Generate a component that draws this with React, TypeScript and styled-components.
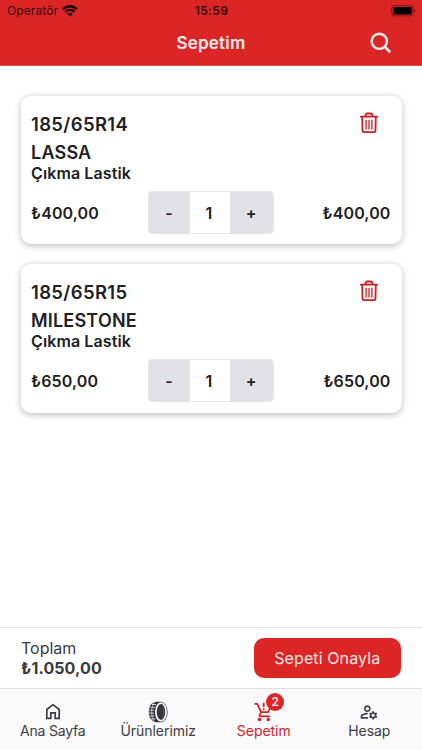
import React from "react";
import styled, { createGlobalStyle } from "styled-components";
import { MdOutlineManageAccounts } from "react-icons/md";

const RED = "#dc2626";

const GlobalStyle = createGlobalStyle`
  * { box-sizing: border-box; }
  body { margin: 0; background: #fff; }
  button { font: inherit; color: inherit; border: 0; padding: 0; background: none; }
  svg { display: block; }
`;

const Screen = styled.div`
  width: 422px;
  height: 750px;
  display: flex;
  flex-direction: column;
  background: #fff;
  color: #202124;
  font-family: Inter, "Liberation Sans", sans-serif;
  overflow: hidden;
`;

const Header = styled.header`
  height: 66px;
  flex: none;
  background: ${RED};
  border-bottom: 1px solid #dc5050;
`;

const StatusBar = styled.div`
  height: 22px;
  display: grid;
  grid-template-columns: 1fr auto 1fr;
  align-items: center;
  padding: 0 6px 0 7px;
  color: #350909;
  font-size: 12px;
  line-height: 22px;
`;

const Carrier = styled.div`
  display: flex;
  align-items: center;
  gap: 4px;
  letter-spacing: 0.1px;
`;

const Clock = styled.div`
  font-weight: 600;
  letter-spacing: 0.35px;
`;

const BatterySlot = styled.div`
  display: flex;
  justify-content: flex-end;
`;

const TitleBar = styled.div`
  height: 42px;
  display: grid;
  grid-template-columns: 1fr auto 1fr;
  align-items: center;
  padding: 0 30px;
`;

const Title = styled.h1`
  grid-column: 2;
  margin: 0;
  color: #ffeeee;
  font-size: 17px;
  font-weight: 600;
  letter-spacing: 0.2px;
  line-height: 22px;
`;

const SearchButton = styled.button`
  justify-self: end;
`;

const CartList = styled.main`
  flex: 1;
  display: flex;
  flex-direction: column;
  gap: 20px;
  padding: 30px 20.5px 0;
`;

const Card = styled.article`
  height: 148.3px;
  padding: 14px 11px 10px 10.5px;
  border-radius: 10px;
  background: #fff;
  box-shadow: 0 1.5px 7px rgba(0, 0, 0, 0.25);
`;

const CardTop = styled.div`
  display: flex;
  justify-content: space-between;
  align-items: flex-start;
`;

const ProductName = styled.h2<{ $size?: boolean }>`
  margin: 0;
  font-size: ${(p) => (p.$size ? "18.5px" : "18px")};
  font-weight: 600;
  letter-spacing: ${(p) => (p.$size ? "0.35px" : "0.2px")};
  line-height: 28.5px;
`;

const Condition = styled.div`
  font-size: 16px;
  font-weight: 600;
  letter-spacing: 0.1px;
  line-height: 13px;
`;

const DeleteButton = styled.button`
  margin: 1px 9.5px 0 0;
  color: #c82025;
`;

const PriceRow = styled.div`
  display: grid;
  grid-template-columns: 116.5px 126px 1fr;
  align-items: center;
  margin-top: 11px;
`;

const Price = styled.div<{ $end?: boolean }>`
  font-size: 16px;
  font-weight: 600;
  letter-spacing: 0.12px;
  text-align: ${(p) => (p.$end ? "right" : "left")};
`;

const Stepper = styled.div`
  width: 126.5px;
  height: 43px;
  display: grid;
  grid-template-columns: 41px 40px 1fr;
  border: 1px solid #e6e6ea;
  border-radius: 4px;
  overflow: hidden;
  font-size: 16px;
  font-weight: 600;
`;

const StepButton = styled.button`
  background: #e2e1e7;
`;

const Quantity = styled.div`
  display: grid;
  place-items: center;
  padding-right: 1px;
`;

const Summary = styled.section`
  height: 61px;
  flex: none;
  display: flex;
  justify-content: space-between;
  align-items: flex-start;
  padding: 10px 21px 0;
  border-top: 1px solid #e2e2e4;
  color: #3b3b3f;
`;

const TotalLabel = styled.div`
  font-size: 16px;
  line-height: 21px;
`;

const TotalValue = styled.div`
  font-size: 16px;
  font-weight: 700;
  letter-spacing: 0.1px;
  line-height: 19px;
`;

const ConfirmButton = styled.button`
  width: 147.5px;
  height: 40px;
  border-radius: 10px;
  background: ${RED};
  color: #ffeaea;
  font-size: 16px;
  letter-spacing: 0.1px;
`;

const TabBar = styled.nav`
  height: 62px;
  flex: none;
  display: grid;
  grid-template-columns: repeat(4, 1fr);
  background: #fafafa;
  border-top: 1px solid #dedee0;
`;

const Tab = styled.button<{ $active?: boolean }>`
  display: flex;
  flex-direction: column;
  align-items: center;
  padding-top: 12px;
  color: ${(p) => (p.$active ? "#d02429" : "#3c3d44")};
`;

const TabIcon = styled.span`
  position: relative;
  height: 21px;
  display: flex;
  align-items: center;
`;

const TabLabel = styled.span<{ $tight?: boolean }>`
  font-size: 14px;
  letter-spacing: ${(p) => (p.$tight ? "-0.2px" : "-0.05px")};
  line-height: 18px;
`;

const Badge = styled.span`
  position: absolute;
  left: 12.5px;
  top: -8px;
  width: 18px;
  height: 18px;
  border-radius: 50%;
  background: ${RED};
  color: #fff;
  font-size: 12px;
  font-weight: 500;
  line-height: 18px;
  text-align: center;
`;

const Wifi = () => (
  <svg width="16" height="12" viewBox="0 0 16 12" fill="none" stroke="#160404" strokeWidth="2.3">
    <path d="M.9 4.1Q8-1.7 15.1 4.1M3.2 6.8q4.8-3.9 9.6 0" />
    <path d="M5.2 8.8q2.8-2.2 5.6 0L8 11.6Z" fill="#160404" stroke="none" />
  </svg>
);

const Battery = () => (
  <svg width="25" height="12" viewBox="0 0 25 12">
    <rect x=".7" y=".7" width="21.6" height="10.2" rx="2.8" fill="none" stroke="#811414" />
    <rect x="2.2" y="2.1" width="18.6" height="7.4" rx="1.5" />
    <path d="M23.5 4v4q1.1-.8 1.1-2t-1.1-2" fill="#811414" />
  </svg>
);

const Search = () => (
  <svg width="22" height="22" viewBox="0 0 22 22" fill="none" stroke="#fff0f0" strokeWidth="2.4">
    <circle cx="9.3" cy="9.3" r="7.6" />
    <path d="m14.6 14.6 5.6 5.6" strokeWidth="2.7" />
  </svg>
);

const Trash = () => (
  <svg width="24" height="24" viewBox="0 0 24 24" fill="none" stroke="currentColor" strokeWidth="1.8" strokeLinecap="round" strokeLinejoin="round">
    <path d="M3.8 5.6h16.4M5.2 6l.3 13.2q.1 2 2 2h9q1.9 0 2-2L18.8 6M8.2 5.3 9 3.1q.2-.6 1.2-.6h3.6q1 0 1.2.6l.8 2.2" />
    <path d="M9.1 9.2v8.8M12 9.2v8.8M14.9 9.2v8.8" strokeWidth="1.3" />
  </svg>
);

const Home = () => (
  <svg width="16" height="17" viewBox="0 0 16 17" fill="none" stroke="currentColor" strokeWidth="1.7">
    <path d="M1.8 6.5 8 1.7l6.2 4.8v8.9h-4V9.8H5.8v5.6h-4Z" />
  </svg>
);

const Tire = () => (
  <svg width="20" height="22" viewBox="0 0 20 22">
    <path d="M8 .8h5v20.4H8C3.2 20.5.8 16.4.8 11S3.2 1.5 8 .8Z" fill="#35363d" />
    <ellipse cx="13" cy="11" rx="6.6" ry="10.3" fill="#35363d" />
    <ellipse cx="13" cy="11" rx="5.1" ry="8.8" fill="none" stroke="#fafafa" strokeWidth="1.7" />
    <ellipse cx="13" cy="11" rx="3.5" ry="6.7" fill="#35363d" />
    <path d="M4 3.5h4.2M2.4 6.3h4.5M1.2 9.2h4.9M1 12.1h5M1.6 15h4.8M3.1 17.9h4.5" stroke="#fafafa" strokeWidth=".8" />
    <path d="M6 1.6C2.9 6.4 2.9 15.6 6 20.4" fill="none" stroke="#fafafa" strokeWidth=".5" />
    <path d="M14.8 6c1.4 3 1.4 7 0 10" fill="none" stroke="#85868c" strokeWidth=".5" />
  </svg>
);

const Cart = () => (
  <svg width="20" height="20" viewBox="0 0 20 20" fill="none" stroke="currentColor" strokeWidth="1.7">
    <path d="M.5 1.8h2.7l4 8.3h6.8l3.4-6M7.2 10.1l-1.7 3.2q-.4 1.1.6 1.1h9.8" />
    <path d="M9.7.8V5M9.7 6.3V8" strokeWidth="1.8" />
    <circle cx="5.5" cy="17.5" r="1.8" fill="currentColor" stroke="none" />
    <circle cx="14.3" cy="17.5" r="1.8" fill="currentColor" stroke="none" />
  </svg>
);

const items = [
  { size: "185/65R14", brand: "LASSA", price: "₺400,00" },
  { size: "185/65R15", brand: "MILESTONE", price: "₺650,00" },
];

const CartItem = ({ size, brand, price }: { size: string; brand: string; price: string }) => (
  <Card>
    <CardTop>
      <div>
        <ProductName $size>{size}</ProductName>
        <ProductName>{brand}</ProductName>
        <Condition>Çıkma Lastik</Condition>
      </div>
      <DeleteButton aria-label="Sil"><Trash /></DeleteButton>
    </CardTop>
    <PriceRow>
      <Price>{price}</Price>
      <Stepper>
        <StepButton>-</StepButton>
        <Quantity>1</Quantity>
        <StepButton>+</StepButton>
      </Stepper>
      <Price $end>{price}</Price>
    </PriceRow>
  </Card>
);

export default function App() {
  return (
    <>
      <GlobalStyle />
      <Screen>
        <Header>
          <StatusBar>
            <Carrier>Operatör <Wifi /></Carrier>
            <Clock>15:59</Clock>
            <BatterySlot><Battery /></BatterySlot>
          </StatusBar>
          <TitleBar>
            <Title>Sepetim</Title>
            <SearchButton aria-label="Ara"><Search /></SearchButton>
          </TitleBar>
        </Header>
        <CartList>
          {items.map((item) => <CartItem key={item.size} {...item} />)}
        </CartList>
        <Summary>
          <div>
            <TotalLabel>Toplam</TotalLabel>
            <TotalValue>₺1.050,00</TotalValue>
          </div>
          <ConfirmButton>Sepeti Onayla</ConfirmButton>
        </Summary>
        <TabBar>
          <Tab><TabIcon><Home /></TabIcon><TabLabel $tight>Ana Sayfa</TabLabel></Tab>
          <Tab><TabIcon><Tire /></TabIcon><TabLabel>Ürünlerimiz</TabLabel></Tab>
          <Tab $active><TabIcon><Cart /><Badge>2</Badge></TabIcon><TabLabel>Sepetim</TabLabel></Tab>
          <Tab><TabIcon><MdOutlineManageAccounts size={20} /></TabIcon><TabLabel>Hesap</TabLabel></Tab>
        </TabBar>
      </Screen>
    </>
  );
}
